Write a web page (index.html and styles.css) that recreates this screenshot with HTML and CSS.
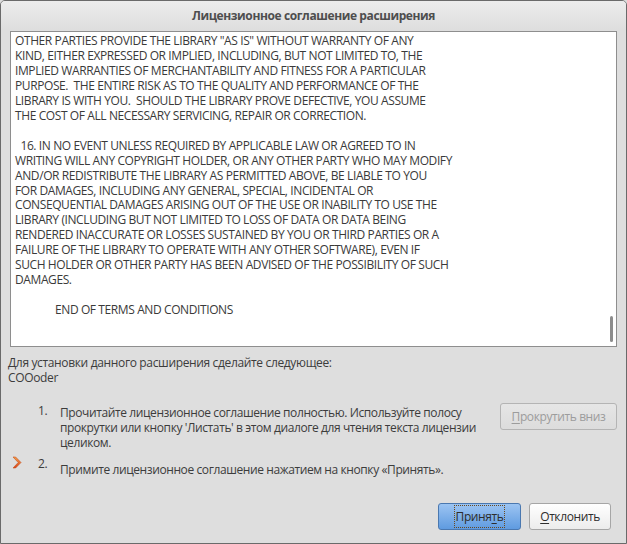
FILE: index.html
```html
<!DOCTYPE html>
<html lang="ru">
<head>
<meta charset="utf-8">
<title>Лицензионное соглашение расширения</title>
<link rel="stylesheet" href="styles.css">
</head>
<body>
<div class="window">
  <div class="titlebar">Лицензионное соглашение расширения</div>
  <div class="content">
    <div class="license">
      <div class="license-text">OTHER PARTIES PROVIDE THE LIBRARY "AS IS" WITHOUT WARRANTY OF ANY
KIND, EITHER EXPRESSED OR IMPLIED, INCLUDING, BUT NOT LIMITED TO, THE
IMPLIED WARRANTIES OF MERCHANTABILITY AND FITNESS FOR A PARTICULAR
PURPOSE.  THE ENTIRE RISK AS TO THE QUALITY AND PERFORMANCE OF THE
LIBRARY IS WITH YOU.  SHOULD THE LIBRARY PROVE DEFECTIVE, YOU ASSUME
THE COST OF ALL NECESSARY SERVICING, REPAIR OR CORRECTION.

  16. IN NO EVENT UNLESS REQUIRED BY APPLICABLE LAW OR AGREED TO IN
WRITING WILL ANY COPYRIGHT HOLDER, OR ANY OTHER PARTY WHO MAY MODIFY
AND/OR REDISTRIBUTE THE LIBRARY AS PERMITTED ABOVE, BE LIABLE TO YOU
FOR DAMAGES, INCLUDING ANY GENERAL, SPECIAL, INCIDENTAL OR
CONSEQUENTIAL DAMAGES ARISING OUT OF THE USE OR INABILITY TO USE THE
LIBRARY (INCLUDING BUT NOT LIMITED TO LOSS OF DATA OR DATA BEING
RENDERED INACCURATE OR LOSSES SUSTAINED BY YOU OR THIRD PARTIES OR A
FAILURE OF THE LIBRARY TO OPERATE WITH ANY OTHER SOFTWARE), EVEN IF
SUCH HOLDER OR OTHER PARTY HAS BEEN ADVISED OF THE POSSIBILITY OF SUCH
DAMAGES.

<span class="indent">END OF TERMS AND CONDITIONS</span>
</div>
      <div class="scrollthumb"></div>
    </div>

    <div class="intro">
      <div>Для установки данного расширения сделайте следующее:</div>
      <div>COOoder</div>
    </div>

    <div class="steps">
      <div class="step step-one">
        <div class="marker"></div>
        <div class="num">1.</div>
        <div class="step-text">Прочитайте лицензионное соглашение полностью. Используйте полосу прокрутки или кнопку 'Листать' в этом диалоге для чтения текста лицензии целиком.</div>
        <button class="btn btn-disabled" disabled><u>П</u>рокрутить вниз</button>
      </div>
      <div class="step step-two">
        <div class="marker">
          <svg width="10" height="13" viewBox="0 0 10 13">
            <defs>
              <linearGradient id="ar" x1="0" y1="0" x2="0" y2="1">
                <stop offset="0" stop-color="#f6a04a"/>
                <stop offset="1" stop-color="#d8431a"/>
              </linearGradient>
            </defs>
            <path d="M1 1 L3.6 1 L9 6.5 L3.6 12 L1 12 L6.2 6.5 Z" fill="url(#ar)" stroke="#c4501e" stroke-width="0.6" stroke-linejoin="round"/>
          </svg>
        </div>
        <div class="num">2.</div>
        <div class="step-text step-text-two">Примите лицензионное соглашение нажатием на кнопку «Принять».</div>
      </div>
    </div>

    <div class="actions">
      <button class="btn btn-primary"><span class="focus">Приня<u>т</u>ь</span></button>
      <button class="btn btn-default"><u>О</u>тклонить</button>
    </div>
  </div>
</div>
</body>
</html>
```

FILE: styles.css
```css
* { box-sizing: border-box; }
html, body {
  margin: 0;
  padding: 0;
  width: 627px;
  height: 544px;
  overflow: hidden;
  background: #dcdcdc;
}
body {
  font-family: "Open Sans", "Noto Sans", sans-serif;
  font-size: 12px;
  letter-spacing: -0.35px;
  color: #3c3c3c;
}
.window {
  width: 627px;
  height: 544px;
  border: 1px solid #6a6a6a;
  border-radius: 5px 5px 0 0;
  background: #dedede;
  display: flex;
  flex-direction: column;
  overflow: hidden;
}
.titlebar {
  height: 29px;
  flex: none;
  display: flex;
  align-items: center;
  justify-content: center;
  font-weight: bold;
  font-size: 12px;
  letter-spacing: -0.4px;
  color: #4e4e4e;
  background: linear-gradient(#ececec, #dedede);
  padding-bottom: 1px;
}
.content {
  flex: 1;
  display: flex;
  flex-direction: column;
  padding: 1px 9px 0 7px;
}
.license {
  position: relative;
  margin-left: 2px;
  height: 316px;
  background: #ffffff;
  border: 1px solid #8e8e8e;
  overflow: hidden;
}
.license-text {
  white-space: pre;
  padding: 2px 0 0 4px;
  line-height: 14.95px;
  font-size: 12px;
  letter-spacing: -0.4px;
  color: #3a3a3a;
}
.indent { padding-left: 40px; }
.scrollthumb {
  position: absolute;
  right: 3px;
  bottom: 4px;
  width: 3px;
  height: 26px;
  border-radius: 2px;
  background: #8d8d8d;
}
.intro {
  margin-top: 8px;
  line-height: 15px;
}
.steps {
  margin-top: 18px;
  display: flex;
  flex-direction: column;
  gap: 6px;
}
.step {
  display: flex;
  align-items: flex-start;
  line-height: 15px;
}
.marker {
  width: 30px;
  flex: none;
  padding-left: 4px;
}
.num {
  width: 22px;
  flex: none;
}
.step-text {
  flex: none;
  width: 425px;
  letter-spacing: -0.4px;
}
.step-one .step-text { padding-top: 2px; }
.step-text-two { padding-top: 6px; }
.btn {
  font-family: inherit;
  font-size: 12px;
  letter-spacing: -0.4px;
  height: 27px;
  border-radius: 3px;
  padding: 0 9px;
  cursor: default;
}
.btn u { text-decoration: underline; text-underline-offset: 2px; }
.btn-disabled {
  margin-left: auto;
  width: 117px;
  color: #9c9c9c;
  border: 1px solid #b4b4b4;
  background: linear-gradient(#e6e6e6, #dcdcdc);
}
.actions {
  margin-top: auto;
  margin-bottom: 13px;
  display: flex;
  justify-content: flex-end;
  gap: 8px;
  padding-right: 6px;
}
.btn-primary {
  width: 83px;
  color: #2d2d2d;
  border: 1px solid #4a78b0;
  background: linear-gradient(#9cc4f2, #5f9be0);
}
.focus {
  outline: 1px dotted #6a4a20;
  padding: 2px 1px;
}
.btn-default {
  width: 82px;
  color: #2d2d2d;
  border: 1px solid #a6a6a6;
  background: linear-gradient(#ffffff, #ececec);
}
```
